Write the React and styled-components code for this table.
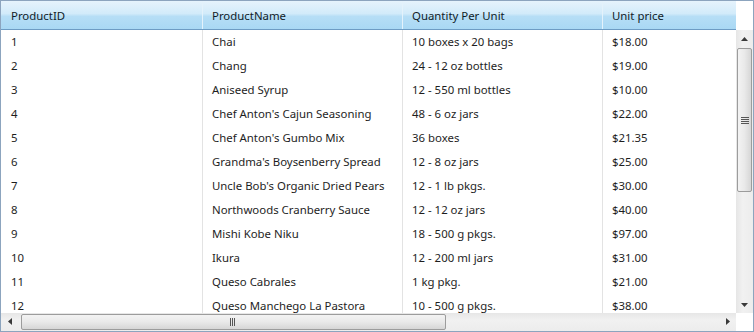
import React from 'react';
import styled, { createGlobalStyle } from 'styled-components';

const GlobalStyle = createGlobalStyle`
  html, body { margin: 0; padding: 0; background: #ffffff; }
  body { font-family: "Noto Sans", "Open Sans", sans-serif; }
`;

const products = [
  [1, 'Chai', '10 boxes x 20 bags', '$18.00'],
  [2, 'Chang', '24 - 12 oz bottles', '$19.00'],
  [3, 'Aniseed Syrup', '12 - 550 ml bottles', '$10.00'],
  [4, "Chef Anton's Cajun Seasoning", '48 - 6 oz jars', '$22.00'],
  [5, "Chef Anton's Gumbo Mix", '36 boxes', '$21.35'],
  [6, "Grandma's Boysenberry Spread", '12 - 8 oz jars', '$25.00'],
  [7, "Uncle Bob's Organic Dried Pears", '12 - 1 lb pkgs.', '$30.00'],
  [8, 'Northwoods Cranberry Sauce', '12 - 12 oz jars', '$40.00'],
  [9, 'Mishi Kobe Niku', '18 - 500 g pkgs.', '$97.00'],
  [10, 'Ikura', '12 - 200 ml jars', '$31.00'],
  [11, 'Queso Cabrales', '1 kg pkg.', '$21.00'],
  [12, 'Queso Manchego La Pastora', '10 - 500 g pkgs.', '$38.00'],
];

const columns = ['ProductID', 'ProductName', 'Quantity Per Unit', 'Unit price'];
const widths = '202px 200px 200px 200px';

const Frame = styled.div`
  width: 754px;
  height: 332px;
  box-sizing: border-box;
  border: 1px solid #8ca4be;
  display: grid;
  grid-template-columns: 735px 17px;
  grid-template-rows: 29px 283px 18px;
  overflow: hidden;
  font-size: 11.4px;
  color: #1e1e1e;
`;

const Clip = styled.div`
  overflow: hidden;
  min-width: 0;
`;

const HeaderRow = styled.div`
  display: grid;
  grid-template-columns: ${widths};
  height: 29px;
  box-sizing: border-box;
  border-bottom: 1px solid #6d9cc4;
  background: linear-gradient(#e6f3fc 0%, #d2ebfa 45%, #b6def6 55%, #a9d8f4 100%);
`;

const HeaderCell = styled.div`
  display: flex;
  align-items: center;
  padding-left: ${(p) => (p.$first ? '10px' : '9px')};
  padding-top: 1px;
  border-right: 1px solid #e4f2fb;
  color: #111c28;
  white-space: nowrap;
`;

const Corner = styled.div`
  background: #ffffff;
`;

const Body = styled.div`
  overflow: hidden;
`;

const Row = styled.div`
  display: grid;
  grid-template-columns: ${widths};
  height: 24px;
`;

const Cell = styled.div`
  display: flex;
  align-items: center;
  padding-left: ${(p) => (p.$first ? '10px' : '9px')};
  padding-bottom: 1px;
  border-right: 1px solid #e3e3e3;
  white-space: nowrap;
  overflow: hidden;
`;

const VTrack = styled.div`
  display: flex;
  flex-direction: column;
  background: linear-gradient(90deg, #e6e6e6, #f1f1f1 40%, #ececec);
`;

const HTrack = styled.div`
  display: flex;
  background: linear-gradient(#e6e6e6, #f1f1f1 40%, #ececec);
`;

const ArrowBtn = styled.div`
  flex: 0 0 17px;
  height: 17px;
  display: flex;
  align-items: center;
  justify-content: center;
`;

const VThumb = styled.div`
  margin: 1px 1px 0 1px;
  height: 144px;
  box-sizing: border-box;
  border: 1px solid #9c9c9c;
  border-radius: 2px;
  background: linear-gradient(90deg, #f3f3f3, #e9e9e9 50%, #d6d6d6);
  display: flex;
  align-items: center;
  justify-content: center;
`;

const HThumb = styled.div`
  margin: 1px 0 1px 3px;
  width: 425px;
  box-sizing: border-box;
  border: 1px solid #9c9c9c;
  border-radius: 2px;
  background: linear-gradient(#f3f3f3, #e9e9e9 50%, #d6d6d6);
  display: flex;
  align-items: center;
  justify-content: center;
`;

const Spacer = styled.div`
  flex: 1;
`;

const Arrow = ({ dir }) => {
  const pts = {
    up: '0,4 3.5,0 7,4',
    down: '0,0 3.5,4 7,0',
    left: '4,0 0,3.5 4,7',
    right: '0,0 4,3.5 0,7',
  }[dir];
  const vertical = dir === 'up' || dir === 'down';
  return (
    <svg width={vertical ? 7 : 4} height={vertical ? 4 : 7}>
      <polygon points={pts} fill="#3a3a3a" />
    </svg>
  );
};

const Grip = ({ vertical }) => (
  <svg width={vertical ? 8 : 7} height={vertical ? 7 : 8}>
    {[0, 2, 4, 6].slice(0, vertical ? 4 : 3).map((o) =>
      vertical ? (
        <rect key={o} x="0" y={o} width="8" height="1" fill="#555" />
      ) : (
        <rect key={o} x={o} y="0" width="1" height="8" fill="#555" />
      )
    )}
  </svg>
);

export default function App() {
  return (
    <>
      <GlobalStyle />
      <Frame>
        <Clip>
          <HeaderRow>
            {columns.map((c, i) => (
              <HeaderCell key={c} $first={i === 0}>
                {c}
              </HeaderCell>
            ))}
          </HeaderRow>
        </Clip>
        <Corner />
        <Body>
          {products.map((p) => (
            <Row key={p[0]}>
              {p.map((v, i) => (
                <Cell key={i} $first={i === 0}>
                  {v}
                </Cell>
              ))}
            </Row>
          ))}
        </Body>
        <VTrack>
          <ArrowBtn>
            <Arrow dir="up" />
          </ArrowBtn>
          <VThumb>
            <Grip vertical />
          </VThumb>
          <Spacer />
          <ArrowBtn>
            <Arrow dir="down" />
          </ArrowBtn>
        </VTrack>
        <HTrack>
          <ArrowBtn>
            <Arrow dir="left" />
          </ArrowBtn>
          <HThumb>
            <Grip />
          </HThumb>
          <Spacer />
          <ArrowBtn>
            <Arrow dir="right" />
          </ArrowBtn>
        </HTrack>
        <Corner />
      </Frame>
    </>
  );
}
